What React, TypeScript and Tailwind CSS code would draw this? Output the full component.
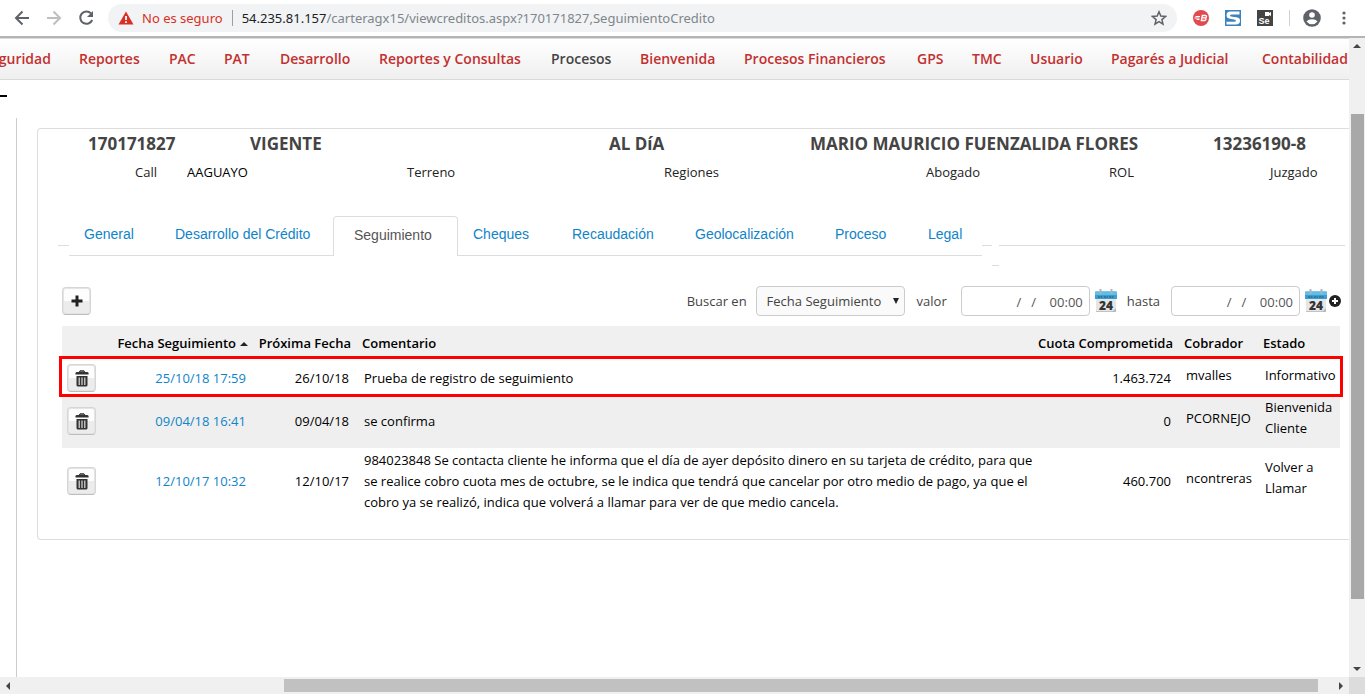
import type { ReactNode } from "react";

const menu: { label: string; cls: string }[] = [
  { label: "Seguridad", cls: "w-[96px] text-[#c23030]" },
  { label: "Reportes", cls: "w-[90px] text-[#c23030]" },
  { label: "PAC", cls: "w-[55px] text-[#c23030]" },
  { label: "PAT", cls: "w-[56px] text-[#c23030]" },
  { label: "Desarrollo", cls: "w-[99px] text-[#c23030]" },
  { label: "Reportes y Consultas", cls: "w-[172px] text-[#c23030]" },
  { label: "Procesos", cls: "w-[89px] text-[#444]" },
  { label: "Bienvenida", cls: "w-[104px] text-[#c23030]" },
  { label: "Procesos Financieros", cls: "w-[173px] text-[#c23030]" },
  { label: "GPS", cls: "w-[55px] text-[#c23030]" },
  { label: "TMC", cls: "w-[58px] text-[#c23030]" },
  { label: "Usuario", cls: "w-[81px] text-[#c23030]" },
  { label: "Pagarés a Judicial", cls: "w-[151px] text-[#c23030]" },
  { label: "Contabilidad", cls: "w-[87px] text-[#c23030]" },
];

const tabs: { label: string; cls: string }[] = [
  { label: "General", cls: "w-[91px]" },
  { label: "Desarrollo del Crédito", cls: "w-[173px]" },
  { label: "Seguimiento", cls: "w-[125px]" },
  { label: "Cheques", cls: "w-[99px]" },
  { label: "Recaudación", cls: "w-[123px]" },
  { label: "Geolocalización", cls: "w-[140px]" },
  { label: "Proceso", cls: "w-[93px]" },
  { label: "Legal", cls: "w-[69px]" },
];

type Entry = {
  date: string;
  next: string;
  comment: string[];
  fee: string;
  collector: string;
  state: string[];
  row: string;
};

const entries: Entry[] = [
  {
    date: "25/10/18 17:59",
    next: "26/10/18",
    comment: ["Prueba de registro de seguimiento"],
    fee: "1.463.724",
    collector: "mvalles",
    state: ["Informativo"],
    row: "h-[35px] outline-[3px] outline-solid outline-[#ff0000] [&>td]:pt-[3px]",
  },
  {
    date: "09/04/18 16:41",
    next: "09/04/18",
    comment: ["se confirma"],
    fee: "0",
    collector: "PCORNEJO",
    state: ["Bienvenida", "Cliente"],
    row: "h-[54px] bg-[#efefef]",
  },
  {
    date: "12/10/17 10:32",
    next: "12/10/17",
    comment: [
      "984023848 Se contacta cliente he informa que el día de ayer depósito dinero en su tarjeta de crédito, para que",
      "se realice cobro cuota mes de octubre, se le indica que tendrá que cancelar por otro medio de pago, ya que el",
      "cobro ya se realizó, indica que volverá a llamar para ver de que medio cancela.",
    ],
    fee: "460.700",
    collector: "ncontreras",
    state: ["Volver a", "Llamar"],
    row: "h-[66px]",
  },
];

function Lines({ items }: { items: string[] }) {
  return (
    <>
      {items.map((line) => (
        <span key={line} className="block whitespace-nowrap">
          {line}
        </span>
      ))}
    </>
  );
}

function IconButton({ label, children }: { label: string; children: ReactNode }) {
  return (
    <button
      type="button"
      aria-label={label}
      className="flex h-7 w-[29px] items-center justify-center rounded-[4px] border border-[#d6d6d6] border-b-[#bdbdbd] bg-linear-to-b from-[#fdfdfd] from-50% to-[#ececec] to-50% shadow-[inset_0_0_0_1px_#e4e4e4]"
    >
      {children}
    </button>
  );
}

function Trash() {
  return (
    <svg viewBox="0 0 14 17" className="h-[17px] w-[14px]" aria-hidden="true">
      <path d="M4 2.500 5 .8h4l1 1.700" fill="#777" stroke="#333" strokeWidth="1" />
      <path d="M.5 3.200q0-1.200 1.500-1.200h10q1.500 0 1.500 1.200v1.300H.5z" fill="#333" />
      <path d="M1.500 6h11v9q0 1.500-1.500 1.500H3q-1.500 0-1.500-1.500z" fill="#333" />
      <path d="M4.200 7.500v7.500M7 7.500v7.500M9.800 7.500v7.500" stroke="#ddd" strokeWidth="1.200" />
    </svg>
  );
}

function Calendar() {
  return (
    <svg viewBox="0 0 22 24" className="h-6 w-[22px]" aria-hidden="true">
      <rect x="1" y="9" width="20" height="14" fill="#e4e6e7" />
      <path d="M1 22.500h20" stroke="#bfc3c5" />
      <path d="M0 3.500q0-1 1-1h20q1 0 1 1V10H0z" fill="#3a9fd0" />
      <path d="M0 3.500q0-1 1-1h20q1 0 1 1V6H0z" fill="#63bce6" />
      <path d="M3 8h5m1 0h4m1 0h5" stroke="#24719b" strokeWidth="1.500" strokeDasharray="2 .6" />
      <path d="M5.500 0v5M16.500 0v5" stroke="#a9b4ba" strokeWidth="2" />
      <path d="m17 23 4-4v4z" fill="#b5b9bb" />
      <text x="11" y="20.500" textAnchor="middle" fontFamily="Open Sans" fontWeight="800" fontSize="12" fill="#333">
        24
      </text>
    </svg>
  );
}

function DateField({ label }: { label: string }) {
  return (
    <>
      <input
        type="text"
        aria-label={label}
        defaultValue="/   /    00:00"
        className="h-[30px] w-[129px] rounded-[4px] border border-[#ccc] bg-white pt-0.5 pr-1.5 text-right text-[13px] whitespace-pre text-[#555]"
      />
      <button type="button" aria-label={`Calendario ${label}`} className="ml-[5px]">
        <Calendar />
      </button>
    </>
  );
}

function Toolbar() {
  return (
    <header className="flex h-[38px] shrink-0 items-center border-b-2 border-[#b4b4b4] bg-white pr-[18px] pl-[14px] text-[#5f6368]">
      <button type="button" aria-label="Atrás">
        <svg viewBox="0 0 16 16" className="size-4" fill="none" stroke="#5f6368" strokeWidth="2">
          <path d="M15 8H2M8.500 1.500 2 8l6.500 6.500" />
        </svg>
      </button>
      <button type="button" aria-label="Adelante" className="ml-4">
        <svg viewBox="0 0 16 16" className="size-4" fill="none" stroke="#bdbfc1" strokeWidth="2">
          <path d="M1 8h13M7.500 1.500 14 8l-6.500 6.500" />
        </svg>
      </button>
      <button type="button" aria-label="Recargar" className="ml-4">
        <svg viewBox="0 0 16 16" className="size-4">
          <path d="M13 3.400A6.200 6.200 0 1 0 14.200 10" fill="none" stroke="#5f6368" strokeWidth="2" />
          <path d="M15 1v6H9z" fill="#5f6368" />
        </svg>
      </button>
      <div className="ml-[14px] flex h-7 min-w-0 grow items-center rounded-full bg-[#f1f3f4] pr-2.5 pl-2.5 font-['Noto_Sans',sans-serif] text-[13px]">
        <svg viewBox="0 0 16 14" className="h-[14px] w-4 shrink-0" aria-hidden="true">
          <path d="M8 .5 15.500 13.500H.5z" fill="#d93025" />
          <path d="M8 5v4M8 10.300v1.700" stroke="#fff" strokeWidth="1.800" />
        </svg>
        <span className="ml-2 pt-px whitespace-nowrap text-[#d93025]">No es seguro</span>
        <span className="mx-[9px] h-4 w-px shrink-0 bg-[#9aa0a6]" />
        <span className="grow pt-px whitespace-nowrap text-[#80868b]">
          <span className="text-[#202124]">54.235.81.157</span>
          /carteragx15/viewcreditos.aspx?170171827,SeguimientoCredito
        </span>
        <button type="button" aria-label="Favorito">
          <svg viewBox="0 0 16 16" className="size-4" fill="none" stroke="#5f6368" strokeWidth="1.500">
            <path d="m8 1.800 1.800 4.300 4.700.4-3.600 3.100 1.100 4.600L8 11.700l-4 2.500 1.100-4.600L1.500 6.500l4.700-.4z" />
          </svg>
        </button>
      </div>
      <svg viewBox="0 0 16 16" className="ml-4 size-4 shrink-0" aria-hidden="true">
        <circle cx="8" cy="8" r="8" fill="#e34a50" />
        <path d="M2.500 6.500h4.500M1.500 8h5M3.500 9.500h3" stroke="#fff" strokeWidth="1" />
        <path d="M9.300 5.500h3.200q1.200 0 1 1.200-.2 1.200-1.300 1.200H9q1.300 0 3 0 1.200.2 1 1.300-.2 1.300-1.500 1.300H8.300z" fill="none" stroke="#fff" strokeWidth="1.300" />
      </svg>
      <svg viewBox="0 0 16 16" className="ml-4 size-4 shrink-0" aria-hidden="true">
        <rect width="16" height="16" fill="#3f83bd" />
        <path d="M14.500 1.500v3H7q-2 0-2 1t2 1.200l4.500.6q3.500.5 3.500 3.400 0 3.800-4 3.800H1.500v-2.800H9q2 0 2-1T9 9.400l-4-.6Q1.500 8.300 1.500 5.300 1.500 1.500 5.500 1.500z" fill="#fff" />
      </svg>
      <svg viewBox="0 0 16 16" className="ml-4 size-4 shrink-0" aria-hidden="true">
        <rect width="16" height="16" fill="#444" />
        <path d="M8 2h4v1l2-1v4l-2-1v1H8z" fill="#fff" />
        <text x="1.500" y="14" fontFamily="Liberation Sans" fontWeight="700" fontSize="9" fill="#fff">
          Se
        </text>
      </svg>
      <span className="ml-4 h-4 w-px shrink-0 bg-[#cfd1d3]" />
      <button type="button" aria-label="Perfil" className="ml-3">
        <svg viewBox="0 0 20 20" className="size-5">
          <circle cx="10" cy="10" r="8.800" fill="#5f6368" />
          <circle cx="10" cy="7" r="2.800" fill="#fff" />
          <path d="M4.500 13.600q1.700-2.400 5.500-2.400t5.500 2.400Q13.500 16.300 10 16.300t-5.500-2.700z" fill="#fff" />
        </svg>
      </button>
      <button type="button" aria-label="Menú" className="ml-[19px]">
        <svg viewBox="0 0 6 16" className="h-4 w-1.5" fill="#5f6368">
          <circle cx="3" cy="3" r="1.600" />
          <circle cx="3" cy="8" r="1.600" />
          <circle cx="3" cy="13" r="1.600" />
        </svg>
      </button>
    </header>
  );
}

function MainMenu() {
  return (
    <nav className="flex h-[42px] items-center justify-end overflow-hidden border-t border-b border-[#d9d9d9] bg-linear-to-b from-white to-[#efefef] pb-0.5">
      {menu.map((item) => (
        <a key={item.label} href="#" className={`shrink-0 text-[14px] font-semibold whitespace-nowrap ${item.cls}`}>
          {item.label}
        </a>
      ))}
    </nav>
  );
}

function CreditSummary() {
  return (
    <>
      <div className="grid h-[30px] grid-cols-[50fr_162fr_359fr_201fr_403fr_136fr] items-center text-[17px] font-bold whitespace-nowrap text-[#444]">
        <span />
        <span>170171827</span>
        <span>VIGENTE</span>
        <span>AL DíA</span>
        <span>MARIO MAURICIO FUENZALIDA FLORES</span>
        <span>13236190-8</span>
      </div>
      <div className="grid h-7 grid-cols-[97fr_52fr_220fr_257fr_262fr_183fr_161fr_79fr] items-center text-[13px] font-medium whitespace-nowrap text-[#222]">
        <span />
        <span>Call</span>
        <span className="font-normal text-black">AAGUAYO</span>
        <span>Terreno</span>
        <span>Regiones</span>
        <span>Abogado</span>
        <span>ROL</span>
        <span>Juzgado</span>
      </div>
    </>
  );
}

function TabBar() {
  return (
    <div className="mt-[29px] flex h-[50px] items-start pr-1 pl-5 font-['Liberation_Sans',Arial,sans-serif] text-[14px]">
      <span className="mt-[29px] h-px w-[11px] shrink-0 bg-[#ddd]" />
      <div role="tablist" className="flex h-10 shrink-0">
        {tabs.map((tab) => {
          const active = tab.label === "Seguimiento";
          const look = active
            ? "rounded-t-[4px] border border-b-0 border-[#ddd] pb-[3px] pl-5 text-[#555]"
            : "border-b border-[#ddd] pb-0.5 pl-[15px] text-[#0f84c8]";
          return (
            <button
              key={tab.label}
              type="button"
              role="tab"
              aria-selected={active}
              className={`text-left whitespace-nowrap ${look} ${tab.cls}`}
            >
              {tab.label}
            </button>
          );
        })}
      </div>
      <span className="mt-[29px] h-px w-2.5 shrink-0 bg-[#ddd]" />
      <span className="mt-[49px] h-px w-[7px] shrink-0 bg-[#ddd]" />
      <span className="mt-[29px] h-px grow bg-[#ddd]" />
    </div>
  );
}

function SearchBar() {
  return (
    <div className="mt-5 flex h-[30px] items-center pr-2 pl-6 text-[13px] text-[#444]">
      <IconButton label="Agregar">
        <svg viewBox="0 0 12 12" className="size-3">
          <path d="M6 .5v11M.5 6h11" stroke="#222" strokeWidth="3" />
        </svg>
      </IconButton>
      <label htmlFor="field" className="ml-auto pt-0.5">
        Buscar en
      </label>
      <div className="relative ml-[9px]">
        <select
          id="field"
          className="h-[30px] w-[149px] appearance-none rounded-[4px] border border-[#ccc] bg-[#fafafa] pt-0.5 pl-2.5 text-[13px] text-[#444]"
        >
          <option>Fecha Seguimiento</option>
        </select>
        <svg viewBox="0 0 6 6" className="pointer-events-none absolute top-3 right-1.5 size-1.5" aria-hidden="true">
          <path d="M0 0h6L3 6z" fill="#222" />
        </svg>
      </div>
      <span className="mr-[14px] ml-3 pt-0.5">valor</span>
      <DateField label="valor" />
      <span className="mr-[11px] ml-2.5 pt-0.5">hasta</span>
      <DateField label="hasta" />
      <button type="button" aria-label="Agregar filtro" className="ml-0.5">
        <svg viewBox="0 0 12 12" className="size-3">
          <circle cx="6" cy="6" r="6" fill="#222" />
          <path d="M6 3v6M3 6h6" stroke="#fff" strokeWidth="2" />
        </svg>
      </button>
    </div>
  );
}

function FollowUpTable() {
  return (
    <div className="mt-2.5 pr-[9px] pl-6">
      <table className="w-full table-fixed border-collapse text-[13px] leading-[21px] text-black">
        <colgroup>
          <col className="w-[46px]" />
          <col className="w-[146px]" />
          <col className="w-[105px]" />
          <col />
          <col className="w-[160px]" />
          <col className="w-[79px]" />
          <col className="w-[82px]" />
        </colgroup>
        <thead>
          <tr className="h-[33px] bg-[#f0f0f0] text-left whitespace-nowrap [&>th]:pt-0.5">
            <th aria-label="Acciones" />
            <th className="pr-1.5 text-right font-semibold">
              <span className="inline-flex items-center gap-1">
                Fecha Seguimiento
                <svg viewBox="0 0 8 4" className="h-1 w-2" aria-hidden="true">
                  <path d="M0 4h8L4 0z" fill="#222" />
                </svg>
              </span>
            </th>
            <th className="pr-2 text-right font-semibold">Próxima Fecha</th>
            <th className="pl-[3px] font-semibold">Comentario</th>
            <th className="pr-1.5 text-right font-semibold">Cuota Comprometida</th>
            <th className="pl-[5px] font-semibold">Cobrador</th>
            <th className="pl-[5px] font-semibold">Estado</th>
          </tr>
        </thead>
        <tbody>
          {entries.map((entry) => (
            <tr key={entry.date} className={entry.row}>
              <td className="pl-[5px]">
                <IconButton label={`Eliminar ${entry.date}`}>
                  <Trash />
                </IconButton>
              </td>
              <td className="pr-2 text-right">
                <a href="#" className="text-[#0f84c8]">
                  {entry.date}
                </a>
              </td>
              <td className="pr-2.5 text-right">{entry.next}</td>
              <td className="pl-[5px]">
                <Lines items={entry.comment} />
              </td>
              <td className="pr-2 text-right">{entry.fee}</td>
              <td className="pb-1.5 pl-[7px]">{entry.collector}</td>
              <td className="pb-1.5 pl-[7px]">
                <Lines items={entry.state} />
              </td>
            </tr>
          ))}
        </tbody>
      </table>
    </div>
  );
}

function Arrow({ d }: { d: string }) {
  return (
    <svg viewBox="0 0 8 8" className="size-2 shrink-0" aria-hidden="true">
      <path d={d} fill="#444" />
    </svg>
  );
}

export default function App() {
  return (
    <div className="flex h-screen flex-col overflow-hidden bg-white font-['Open_Sans',sans-serif]">
      <Toolbar />
      <div className="flex min-h-0 grow">
        <div className="flex min-w-0 grow flex-col overflow-hidden">
          <MainMenu />
          <div className="flex h-[38px] shrink-0 items-center">
            <span className="mb-1.5 h-0.5 w-[7px] bg-black" />
          </div>
          <main className="ml-4 grow border-l border-[#ccc] pt-2.5 pl-5">
            <section className="rounded-l-[4px] border border-r-0 border-[#ddd] pb-[25px]">
              <CreditSummary />
              <TabBar />
              <SearchBar />
              <FollowUpTable />
            </section>
          </main>
        </div>
        <div className="flex w-4 shrink-0 flex-col items-center bg-[#f0f0f0] py-1">
          <Arrow d="M0 6h8L4 2z" />
          <div className="mt-16 mb-[66px] w-[13px] grow bg-[#a8a8a8]" />
          <Arrow d="M0 2h8L4 6z" />
        </div>
      </div>
      <div className="flex h-[17px] shrink-0 items-center bg-[#f0f0f0]">
        <div className="flex grow items-center px-1">
          <Arrow d="M6 0v8L2 4z" />
          <div className="mr-[19px] ml-[272px] h-[13px] grow bg-[#c1c1c1]" />
          <Arrow d="M2 0v8l4-4z" />
        </div>
        <div className="h-full w-4 bg-[#dcdcdc]" />
      </div>
    </div>
  );
}
